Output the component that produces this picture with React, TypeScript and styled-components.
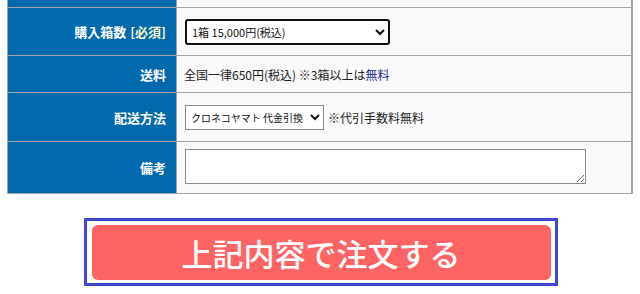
import React from 'react';
import styled, { createGlobalStyle } from 'styled-components';

const GlobalStyle = createGlobalStyle`
  body {
    margin: 0;
    background: #fff;
    font-family: "Noto Sans CJK JP", "Noto Sans", sans-serif;
  }
`;

const Page = styled.div`
  padding: 0 7px;
`;

const Table = styled.div`
  width: 626px;
  box-sizing: border-box;
  display: grid;
  grid-template-columns: 168px 1fr;
  grid-template-rows: 7px 47px 36px 48px 51px;
  gap: 1px;
  padding: 0 2px 1px 1px;
  background: #a3a3a3;
`;

const Label = styled.div`
  background: #006aad;
  color: #fff;
  font-size: 13px;
  font-weight: bold;
  display: flex;
  align-items: center;
  justify-content: flex-end;
  padding-right: 10px;
`;

const Required = styled.span`
  color: #f4f4cc;
  margin-left: 4px;
`;

const Value = styled.div`
  background: #f9f9f9;
  color: #222;
  font-size: 12px;
  display: flex;
  align-items: center;
  padding-left: 7px;
`;

const Select = styled.select<{ $focused?: boolean; $width: number; $fontSize: number }>`
  width: ${p => p.$width}px;
  height: ${p => (p.$focused ? 26 : 25)}px;
  box-sizing: border-box;
  font-family: "Noto Sans CJK JP", sans-serif;
  font-size: ${p => p.$fontSize}px;
  color: #111;
  background: #fff;
  border: ${p => (p.$focused ? '2px solid #111' : '1px solid #8a8a8a')};
  border-radius: ${p => (p.$focused ? '3px' : '0')};
  padding: 0 1px;
  margin-left: 1px;
  outline: none;
`;

const Note = styled.span`
  margin-left: 4px;
`;

const FreeLink = styled.a`
  color: #1f2a8c;
  text-decoration: none;
`;

const Memo = styled.textarea`
  width: 401px;
  height: 35px;
  box-sizing: border-box;
  border: 1px solid #8a8a8a;
  background: #fff;
  margin: -2px 0 0 1px;
`;

const ButtonArea = styled.div`
  display: flex;
  justify-content: center;
  margin-top: 24px;
  padding-left: 1px;
`;

const FocusFrame = styled.div`
  border: 3px solid #3d47cf;
  padding: 4px 4px 3px 5px;
  background: #fff;
`;

const OrderButton = styled.button`
  width: 459px;
  height: 55px;
  border: none;
  border-radius: 6px;
  background: #ff6464;
  color: #fff;
  font-family: "Noto Sans CJK JP", sans-serif;
  font-size: 31px;
  font-weight: 500;
  padding: 0;
  cursor: pointer;
  display: block;
`;

export default function App() {
  return (
    <>
      <GlobalStyle />
      <Page>
        <Table>
          <Label />
          <Value />

          <Label>
            購入箱数<Required>[必須]</Required>
          </Label>
          <Value>
            <Select $focused $width={205} $fontSize={11} defaultValue="1">
              <option value="1">1箱 15,000円(税込)</option>
              <option value="2">2箱 30,000円(税込)</option>
              <option value="3">3箱 45,000円(税込)</option>
            </Select>
          </Value>

          <Label>送料</Label>
          <Value>
            全国一律650円(税込) ※3箱以上は<FreeLink href="#">無料</FreeLink>
          </Value>

          <Label>配送方法</Label>
          <Value>
            <Select $width={139} $fontSize={10} defaultValue="cod">
              <option value="cod">クロネコヤマト 代金引換</option>
            </Select>
            <Note>※代引手数料無料</Note>
          </Value>

          <Label>備考</Label>
          <Value>
            <Memo />
          </Value>
        </Table>

        <ButtonArea>
          <FocusFrame>
            <OrderButton>上記内容で注文する</OrderButton>
          </FocusFrame>
        </ButtonArea>
      </Page>
    </>
  );
}
